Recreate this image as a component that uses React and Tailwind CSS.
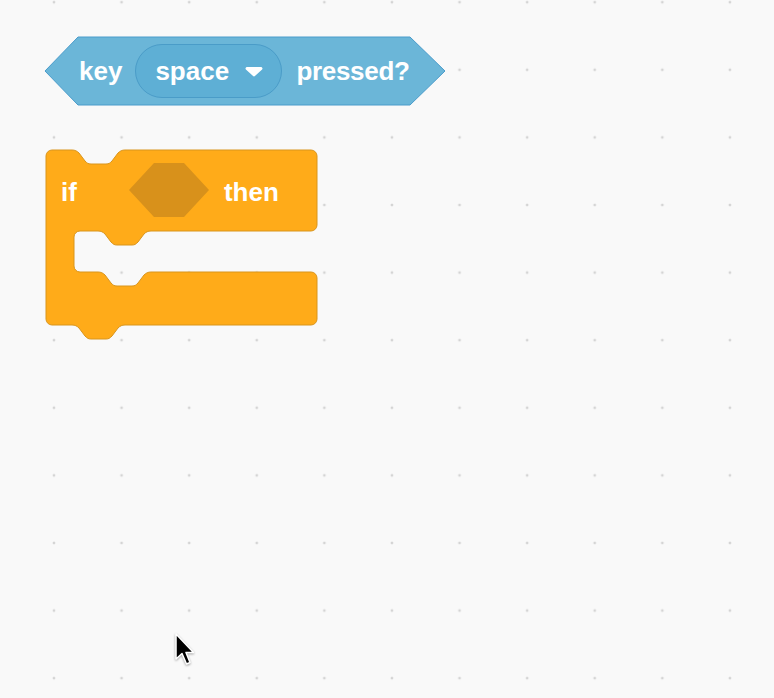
const notchR = "c 3,0 5,1 7,3 l 6,8 c 2,2 3,3 6,3 h 15 c 3,0 4,-1 6,-3 l 6,-8 c 2,-2 4,-3 7,-3";
const notchL = "c -3,0 -5,1 -7,3 l -6,8 c -2,2 -3,3 -6,3 h -15 c -3,0 -4,-1 -6,-3 l -6,-8 c -2,-2 -4,-3 -7,-3";

const ifPath = [
  "M 46,156 a 6 6 0 0 1 6 -6 H 72",
  notchR,
  "H 311 a 6 6 0 0 1 6 6 V 225 a 6 6 0 0 1 -6 6 H 151",
  notchL,
  "H 80 a 6 6 0 0 0 -6 6 V 266 a 6 6 0 0 0 6 6 H 98",
  notchR,
  "H 311 a 6 6 0 0 1 6 6 V 319 a 6 6 0 0 1 -6 6 H 125",
  notchL,
  "H 52 a 6 6 0 0 1 -6 -6 Z",
].join(" ");

function KeyPressed() {
  return (
    <div className="absolute left-[44px] top-[36px] w-[402px] h-[70px]">
      <svg className="absolute inset-0" width="402" height="70" viewBox="0 0 402 70">
        <path
          d="M 1,35 L 34,1 H 366 L 401,35 L 366,69 H 34 Z"
          fill="#6bb6d8"
          stroke="#4a9ccb"
          strokeWidth="1"
          strokeLinejoin="round"
        />
      </svg>
      <div className="relative flex items-center h-full pl-[35px] text-white font-bold text-[26px] leading-none">
        <span>key</span>
        <div className="ml-[13px] flex items-center w-[147px] h-[54px] rounded-full bg-[#5eafd5] border border-[#4a9cc8] pl-[19px]">
          <span>space</span>
          <svg className="ml-[16px]" width="18" height="11" viewBox="0 0 18 11">
            <path d="M 2,1 H 16 a 1.5 1.5 0 0 1 1.1 2.5 L 10.2 9.8 a 1.7 1.7 0 0 1 -2.4 0 L 0.9 3.5 A 1.5 1.5 0 0 1 2,1 Z" fill="#fff" />
          </svg>
        </div>
        <span className="ml-[14px] tracking-[-0.3px]">pressed?</span>
      </div>
    </div>
  );
}

function IfThen() {
  return (
    <div className="absolute left-[45px] top-[149px] w-[274px] h-[193px]">
      <svg className="absolute inset-0" width="274" height="193" viewBox="45 149 274 193">
        <path d={ifPath} fill="#ffab19" stroke="#d9951d" strokeWidth="1" />
      </svg>
      <div className="relative flex items-center h-[82px] pl-[16px] text-white font-bold text-[26px] leading-none">
        <span className="pt-[4px]">if</span>
        <svg className="ml-[51px]" width="82" height="56" viewBox="0 0 82 56">
          <path d="M 1,28 L 26,1 H 56 L 81,28 L 56,55 H 26 Z" fill="#d8911b" strokeLinejoin="round" />
        </svg>
        <span className="ml-[14px] pt-[4px]">then</span>
      </div>
    </div>
  );
}

function Cursor() {
  return (
    <svg className="absolute left-[174px] top-[632px] drop-shadow-[0_1px_1px_rgba(0,0,0,0.35)]" width="26" height="38" viewBox="0 0 26 38">
      <path
        d="M 2,2 L 2,27 L 8,21.5 L 12.5,32 L 16,30.5 L 12,20.5 L 19.5,20.5 Z"
        fill="#000"
        stroke="#fff"
        strokeWidth="1.5"
        strokeLinejoin="round"
      />
    </svg>
  );
}

export default function App() {
  return (
    <div
      className="relative w-[774px] h-[698px] overflow-hidden bg-[#f9f9f9] bg-[radial-gradient(circle_at_center,#d4d4d4_1.1px,transparent_1.7px)] bg-[length:67.6px_67.6px] bg-[position:20.2px_-31.6px]"
      style={{ fontFamily: '"Liberation Sans", Arial, sans-serif' }}
    >
      <KeyPressed />
      <IfThen />
      <Cursor />
    </div>
  );
}
